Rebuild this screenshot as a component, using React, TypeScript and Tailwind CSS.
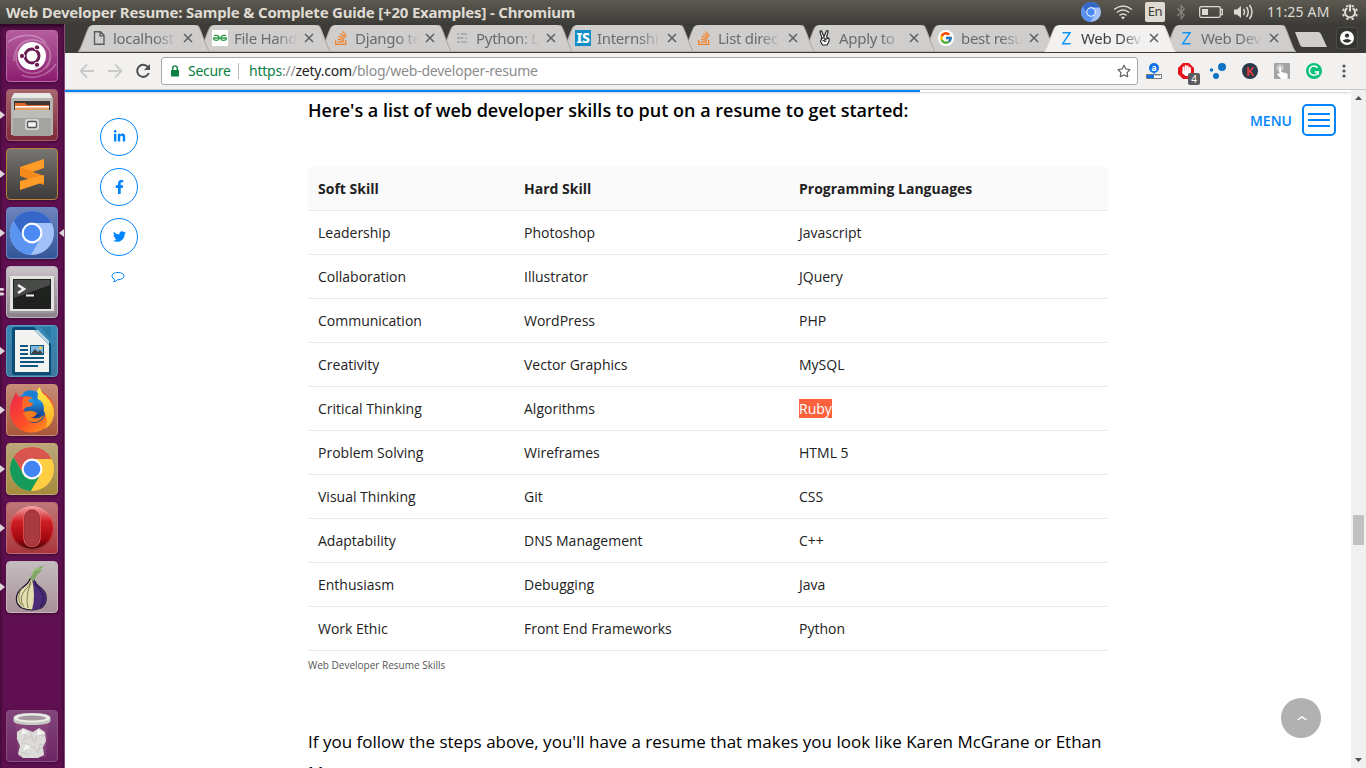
import React from "react";
import { FaLinkedinIn, FaFacebookF, FaTwitter, FaStackOverflow, FaRegStar, FaBluetoothB } from "react-icons/fa";
import { FcGoogle } from "react-icons/fc";

const ui = "font-['Noto_Sans','Open_Sans',sans-serif]";

/* ---------- browser discs ---------- */

function Disc({ top, left, right, hub, ring }: { top: string; left: string; right: string; hub: string; ring: string }) {
  return (
    <g>
      <circle r="22" fill={right} />
      <path d="M-18.46-11.97A22 22 0 0 1 19.6-10H0L-8.66 5Z" fill={top} />
      <path d="M-18.46-11.97L-8.66 5 0 10 8.66 5-1.14 21.97A22 22 0 0 1-18.46-11.97Z" fill={left} />
      <circle r="10.4" fill={ring} />
      <circle r="8.3" fill={hub} />
    </g>
  );
}

const blueDisc = <Disc top="#3567c8" left="#5b93f0" right="#a3c1f9" hub="#4c8bf5" ring="#fff" />;

/* ---------- launcher ---------- */

const glyphs: Record<string, React.ReactNode> = {
  dash: (
    <g fill="none">
      <path d="M8 31C8 15 20 7 33 11c12 4 15 18 7 27M44 21c2 14-8 24-21 22C13 41 7 32 12 21M2 12c11-8 28-10 38 1M50 34c-9 13-24 16-34 11" stroke="#fff" strokeOpacity=".28" strokeWidth="1.6" />
      <circle cx="26" cy="26" r="14" fill="#fff" />
      <circle cx="26" cy="26" r="7" stroke="#6a1a50" strokeWidth="3" />
      <g fill="#6a1a50" stroke="#fff" strokeWidth="1">
        <circle cx="16" cy="26" r="2.6" /><circle cx="31" cy="17.4" r="2.6" /><circle cx="31" cy="34.8" r="2.6" />
      </g>
    </g>
  ),
  files: (
    <g>
      <path d="M8 4h36l3 5v37H5V9z" fill="#b5b5b3" />
      <path d="M8 4h36l2 5H6z" fill="#e8e8e6" />
      <rect x="8" y="12" width="36" height="13" fill="#3c3735" />
      <path d="M9 14h10l2 2h22v6H9z" fill="#df692d" />
      <path d="M9 17h34v3H9z" fill="#fff" /><path d="M9 18.5h34V22H9z" fill="#e8a164" />
      <rect x="7" y="21" width="38" height="26" rx="1" fill="#a3a3a1" />
      <path d="M7 21h38v8H7z" fill="#bcbcba" />
      <rect x="19" y="30" width="14" height="11" rx="2" fill="#d6d6d4" />
      <rect x="21.5" y="32.5" width="9" height="6" rx="1" fill="#f1f1ef" stroke="#555" strokeWidth="1.3" />
    </g>
  ),
  sublime: (
    <g>
      <path d="M14 19l24-8v9l-24 8z" fill="#ff9c28" />
      <path d="M14 19l24 9v9l-24-9z" fill="#f38a1b" />
      <path d="M14 33l24-6v7l-24 8z" fill="#ff9c28" />
    </g>
  ),
  chromium: <g transform="translate(26 26)">{blueDisc}</g>,
  chrome: (
    <g transform="translate(26 26)">
      <Disc top="#d85550" left="#149a5b" right="#ffcd42" hub="#4384f4" ring="#fff" />
    </g>
  ),
  terminal: (
    <g>
      <rect x="3" y="11" width="46" height="36" rx="2" fill="#a09aa0" />
      <rect x="4" y="10" width="44" height="35" rx="1" fill="#e3e3e0" />
      <rect x="7" y="13" width="38" height="30" fill="#202220" />
      <path d="M8 14h36v5L8 32z" fill="#494b49" />
      <path d="M12 19l6 4-6 4" fill="none" stroke="#eee" strokeWidth="2.6" />
      <path d="M20 29.5h8" stroke="#eee" strokeWidth="2" />
    </g>
  ),
  writer: (
    <g>
      <path d="M6 5q0-3 3-3h36v48H9q-3 0-3-3z" fill="#0d4c75" />
      <path d="M28 2h18v18z" fill="#3888b5" />
      <path d="M35 2h10v13z" fill="#2a7aa6" />
      <path d="M9 5h19l15 15v27H9z" fill="#f3f3f1" />
      <path d="M28 5l15 15V16L32 5z" fill="#b9d5e4" />
      <g stroke="#0d5781" strokeWidth="1.8"><path d="M14 21h8M14 25h8M14 29h8M14 33h24M14 37h24M14 41h18" /></g>
      <rect x="24" y="20" width="14" height="10" fill="#0d5781" />
      <rect x="25" y="21" width="12" height="8" fill="#7fb8dd" />
      <path d="M25 29l4-5 3 3 2-2 3 4z" fill="#3a4246" /><circle cx="34.5" cy="23" r="1.5" fill="#efc24b" />
    </g>
  ),
  firefox: (
    <g>
      <circle cx="27" cy="25" r="18" fill="url(#ffblue)" />
      <path d="M10 8q1 4 4 5 4-2 7 0l5 1q-5 2-3 5l4 1q-1 4-5 4-2 8 6 7 4-2 2 2-5 6-10 2 8 8 17 0 5-8-1-17-8-6-3-15 1 4 5 6 9 6 10 15 1 18-17 24C15 51 4 40 4 27 4 18 8 14 10 8z" fill="url(#fforange)" />
      <path d="M34 3q0 5 6 9 8 8 8 18-1 10-9 15 4-8-1-18-9-11-7-18 0-4 3-6z" fill="url(#ffyellow)" />
      <circle cx="28" cy="24" r="10" fill="url(#ffblue)" />
      <path d="M18 8q8-4 14 1l-1 9-8-5q-4-1-7 0z" fill="#1c7fd6" />
      <path d="M17 13q5-2 10 1-6 1-4 4l4 1q0 4-6 4l-5 3z" fill="#ff6a2b" />
      <path d="M17 29q6-4 12-1l2 1q-1 4-7 5 8 2 14-3-4 10-16 6z" fill="#f27b1f" />
    </g>
  ),
  opera: (
    <g>
      <circle cx="26" cy="26" r="22" fill="url(#opera)" />
      <circle cx="26" cy="26" r="21.3" fill="none" stroke="#f2a5a5" strokeOpacity=".4" />
      <rect x="18" y="7.5" width="16" height="37" rx="8" fill="#a83a40" stroke="#ee6a6e" strokeWidth="1.2" />
      <rect x="18.500" y="8" width="15" height="36" rx="7.500" fill="none" stroke="#500" strokeOpacity=".5" strokeWidth=".8" />
    </g>
  ),
  tor: (
    <g>
      <path d="M24 18q-1 4-8 9c-8 7-7 16 0 20q10 4 19 0c7-5 7-14 0-20q-7-5-7-9z" fill="#e3dfae" stroke="#1a1333" strokeWidth="1.2" />
      <path d="M26 18h2q0 4 7 9c7 6 7 15 0 20q-4 2-9 2 4-14 0-31z" fill="#4b2a77" />
      <path d="M25 20q-1 5-6 9-7 8-1 17M25 22q-6 12-3 25M16 27q-6 8-1 17" fill="none" stroke="#827b54" />
      <path d="M29 20q1 5 5 9 7 8 0 17" fill="none" stroke="#26124a" />
      <path d="M25 19q-1-6 5-11l8-4-4 6 3-1q-7 4-9 11z" fill="#7fa765" />
      <path d="M26 14l3-8M30 9l7-2M22 19v-4" stroke="#a8c988" />
    </g>
  ),
  trash: (
    <g>
      <path d="M9 11h34l-3 36H12z" fill="#8d4b80" fillOpacity=".55" />
      <path d="M11 22l6-4 5 2 5 2 6-4 6 4 1 9-3 6 1 8-6 3H17l-5-4 2-8-3-7z" fill="#dcdbd9" />
      <path d="M13 23l7 2-3 6 7-5 5 7 2-8 8 1M15 33l7 1-3 7 8-5 5 7 2-9 5 1M24 21l3 8M31 41l6-4M15 42l8 3" fill="none" stroke="#c2c0bd" strokeWidth=".8" />
      <path d="M17 19l5 4-7 2zM32 20l6 3-7 3zM20 34l5 4-8 3z" fill="#f4f4f2" />
      <path d="M7.500 8q0-5 18.500-5t18.500 5v3q-1 4-18.500 4T7.500 11z" fill="#c9c9c4" />
      <ellipse cx="26" cy="8" rx="18" ry="4.600" fill="#ecece8" />
      <ellipse cx="26" cy="8" rx="14" ry="2.600" fill="#a59aa0" />
    </g>
  ),
};

const launcher = [
  { id: "dash", tile: "from-[#b45c9e] to-[#8d1b70] border-[#b46aa3]", mark: "" },
  { id: "files", tile: "from-[#a5666d] to-[#7e2a3a] border-[#a46069]", mark: "run" },
  { id: "sublime", tile: "from-[#777672] to-[#3d3c3a] border-[#bd8038]", mark: "run" },
  { id: "chromium", tile: "from-[#6d83bd] to-[#355699] border-[#6b87c3]", mark: "active" },
  { id: "terminal", tile: "from-[#cac2c9] to-[#8b8089] border-[#bfb4be]", mark: "two" },
  { id: "writer", tile: "from-[#3888b5] to-[#3c789e] border-[#5a9cc2]", mark: "run" },
  { id: "firefox", tile: "from-[#c58b76] to-[#a8583b] border-[#c78d76]", mark: "run" },
  { id: "chrome", tile: "from-[#baa77c] to-[#a68a3b] border-[#c0ac72]", mark: "run" },
  { id: "opera", tile: "from-[#be7779] to-[#a9353c] border-[#bd6b6f]", mark: "run" },
  { id: "tor", tile: "from-[#c5bcc0] to-[#a89197] border-[#c5b6bc]", mark: "run" },
  { id: "trash", tile: "from-[#82457a] to-[#6d2464] border-[#8b5083]", mark: "" },
];

function LauncherItem({ id, tile, mark }: { id: string; tile: string; mark: string }) {
  return (
    <div className={"relative flex h-[52px] w-[65px] shrink-0 justify-center pr-px " + (id === "trash" ? "mt-auto" : "")}>
      <div className={"h-[52px] w-[52px] rounded-[4px] border bg-linear-to-b shadow-[0_1px_3px_#00000066] " + tile}>
        <svg viewBox="0 0 52 52" className="-m-px h-[52px] w-[52px]">{glyphs[id]}</svg>
      </div>
      {mark && (
        <svg className="absolute left-0 top-[21px] h-[10px] w-[65px]" viewBox="0 0 65 10" fill="#dcd5da">
          {mark === "two" ? <path d="M0 1h3l1.5 1.3L3 3.8H0zM0 5.6h3L4.500 7 3 8.400H0z" /> : <path d="M0 1l5 4-5 4z" />}
          {mark === "active" && <path d="M64 1l-5 4 5 4z" />}
        </svg>
      )}
    </div>
  );
}

/* ---------- tabs ---------- */

const stack = <FaStackOverflow className="h-4 w-4 text-[#f48024]" />;
const zety = (
  <svg viewBox="0 0 16 16" className="h-4 w-4" fill="none" stroke="#0f94f5" strokeWidth="1.5"><path d="M4.500 2.700H12L4.700 13.700h7.800" /></svg>
);

const tabs: { title: string; icon: React.ReactNode; pull: string; z: string; active?: boolean; narrow?: boolean }[] = [
  { title: "localhost", pull: "", z: "z-[9]", icon: <svg viewBox="0 0 16 16" className="h-4 w-4" fill="none" stroke="#5c5c5c" strokeWidth="1.400"><path d="M3.500 1.700h6L13 5.400v8.900H3.500zM9 1.700v4.200h4" /></svg> },
  { title: "File Hand", pull: "-ml-[11px]", z: "z-[8]", icon: <svg viewBox="0 0 16 16" className="h-4 w-4"><path d="M0 0h16v16H0z" fill="#fff" /><path d="M2 5.300h2.500q2.500 0 2.500 2.500t-2.500 2.500Q1.500 10.300 1.500 8H14.500q0 2.300-3 2.300T9 7.800t2.500-2.500H14" fill="none" stroke="#2f9e4c" strokeWidth="1.300" /></svg> },
  { title: "Django te", pull: "-ml-[11px]", z: "z-[7]", icon: stack },
  { title: "Python: L", pull: "-ml-[11px]", z: "z-[6]", icon: <svg viewBox="0 0 16 16" className="h-4 w-4" stroke="#a3a3a3" strokeWidth="1.700"><path d="M3 4h2M6.500 4H13M3 8h6.500M11 8h2M3 12h3M7.500 12H13" /></svg> },
  { title: "Internshi", pull: "-ml-[11px]", z: "z-[5]", icon: <span className="flex h-4 w-4 items-center justify-center bg-[#118ec6] text-[14px] leading-4 font-extrabold tracking-tight text-white">IS</span> },
  { title: "List direc", pull: "-ml-[11px]", z: "z-[4]", icon: stack },
  { title: "Apply to", pull: "-ml-[11px]", z: "z-[3]", icon: <svg viewBox="0 0 16 16" className="h-4 w-4" fill="#fff" stroke="#222" strokeWidth="1.100" strokeLinejoin="round"><path d="M5 8L3 2q0-1.500 1.500-1L7 6.500 9.500 1q1.500-1 1.700.5L9.500 7l2.500 1.500v3L10 15H5.500L3.500 11.500z" /><path d="M4 9l3-1.500 1.500 2L5.500 11M8.500 9.500L11 8M7 11.500l2.500-.5" fill="none" /></svg> },
  { title: "best resu", pull: "-ml-[12px]", z: "z-[2]", narrow: true, icon: <span className="flex h-4 w-4 items-center justify-center rounded-full bg-white"><FcGoogle className="h-[14px] w-[14px]" /></span> },
  { title: "Web Dev", pull: "-ml-[12px]", z: "z-[10]", narrow: true, icon: zety, active: true },
  { title: "Web Dev", pull: "-ml-[12px]", z: "z-[1]", narrow: true, icon: zety },
];

function Tab({ title, icon, pull, z, active, narrow }: (typeof tabs)[number]) {
  return (
    <div className={`relative flex h-[28px] w-[132px] shrink-0 items-center ${narrow ? "pl-[14px]" : "pl-[13px]"} ${pull} ${z}`}>
      <svg className="absolute inset-0 h-[28px] w-[132px]" viewBox="0 0 132 28">
        <path d="M0 28C3 26 9 5 11.500 2.500Q12.500 1 15 1h102q2.500 0 3.500 1.500C123 5 129 26 132 28z" fill={active ? "#f2f1f0" : "#d0cecd"} />
        <path d="M119 1q1.500.5 2 2C124 9 129 26 132 28M0 28C3 26 9 5 11.500 2.500" fill="none" stroke={active ? "#d8d6d4" : "#a9a7a5"} />
        {!active && <path d="M0 27.500h132" stroke="#b5b3b1" />}
      </svg>
      <span className="relative flex h-4 w-4 items-center justify-center">{icon}</span>
      <span className={"relative mask-r-from-65% mask-r-to-100% text-[15px] leading-5 tracking-[-0.3px] whitespace-nowrap " + (narrow ? "ml-[7px] w-[62px] " : "ml-[6px] w-[64px] ") + (active ? "text-[#3f3f3f]" : "text-[#6b6b6b]")}>{title}</span>
      <svg viewBox="0 0 10 10" className="relative ml-[6px] h-[10px] w-[10px]" stroke="#5f5f5f" strokeWidth="1.500"><path d="M1 1l8 8M9 1L1 9" /></svg>
    </div>
  );
}

/* ---------- page ---------- */

const rows = [
  ["Leadership", "Photoshop", "Javascript"],
  ["Collaboration", "Illustrator", "JQuery"],
  ["Communication", "WordPress", "PHP"],
  ["Creativity", "Vector Graphics", "MySQL"],
  ["Critical Thinking", "Algorithms", "Ruby"],
  ["Problem Solving", "Wireframes", "HTML 5"],
  ["Visual Thinking", "Git", "CSS"],
  ["Adaptability", "DNS Management", "C++"],
  ["Enthusiasm", "Debugging", "Java"],
  ["Work Ethic", "Front End Frameworks", "Python"],
];

const cell = "h-[44px] border-b border-[#e8e8e8] px-[10px] pt-[12px] pb-[11px]";
const share = "flex h-[38px] w-[38px] items-center justify-center rounded-full border border-[#0084ff] pb-px";

function Page() {
  return (
    <div className="flex min-h-0 flex-1 bg-white font-['Open_Sans',sans-serif]">
      <div className="relative flex min-w-0 flex-1 overflow-hidden">
        <div className="absolute inset-x-0 top-0 h-[2px] bg-white shadow-[0_1px_2px_#00000030]">
          <div className="h-[2px] w-[855px] bg-[#0084ff]" />
        </div>
        <aside className="flex w-[243px] shrink-0 flex-col gap-3 pt-[28px] pl-[35px] text-[#0084ff]">
          <div className={share}><FaLinkedinIn className="h-[13px] w-[13px]" /></div>
          <div className={share}><FaFacebookF className="h-[14px] w-[13px]" /></div>
          <div className={share}><FaTwitter className="h-[13px] w-[13px]" /></div>
          <svg viewBox="0 0 14 12" className="mt-[3px] ml-[11px] h-[12px] w-[14px]" fill="none" stroke="currentColor"><path d="M3.500 8.300Q1 7 1 5C1 3 3.500 1.500 7 1.500S13 3 13 5 10.500 8.700 6.500 8.700Q5 10.500 2.500 10.700 3.500 10 3.500 8.300z" /></svg>
        </aside>
        <main className="w-[800px] shrink-0">
          <h2 className="mt-[5px] text-[18px] leading-[30px] font-semibold whitespace-nowrap text-black">Here's a list of web developer skills to put on a resume to get started:</h2>
          <table className="mt-[42px] w-[800px] table-fixed border-separate border-spacing-0 text-left text-[14px] leading-[20px] text-[#222]">
            <colgroup><col className="w-[206px]" /><col className="w-[275px]" /><col className="w-[319px]" /></colgroup>
            <thead>
              <tr className="bg-[#fafafa] font-bold">
                <th className={cell}>Soft Skill</th><th className={cell}>Hard Skill</th><th className={cell}>Programming Languages</th>
              </tr>
            </thead>
            <tbody>
              {rows.map((r) => (
                <tr key={r[0]}>
                  {r.map((c) => (
                    <td key={c} className={cell}>{c === "Ruby" ? <span className="bg-[#fb613d] text-white">{c}</span> : c}</td>
                  ))}
                </tr>
              ))}
            </tbody>
          </table>
          <p className="mt-[7px] text-[10px] leading-[14px] text-[#555]">Web Developer Resume Skills</p>
          <p className="mt-[54px] text-[17px] leading-[31px] tracking-[0.01px] whitespace-nowrap text-black">If you follow the steps above, you'll have a resume that makes you look like Karen McGrane or Ethan<br />Marcotte.</p>
        </main>
        <div className="flex flex-1 flex-col items-end justify-between pt-[14px] pr-[15px] pb-[30px]">
          <div className="flex items-center gap-[10px]">
            <span className="text-[14px] font-semibold text-[#0084ff]">MENU</span>
            <div className="flex h-8 w-[34px] flex-col items-center justify-center gap-1 rounded-[5px] border-2 border-[#0084ff]">
              <span className="h-[2px] w-[22px] bg-[#0084ff]" /><span className="h-[2px] w-[22px] bg-[#0084ff]" /><span className="h-[2px] w-[22px] bg-[#0084ff]" />
            </div>
          </div>
          <div className="mr-[15px] flex h-10 w-10 items-center justify-center rounded-full bg-[#b1b1b1]">
            <svg viewBox="0 0 10 6" className="ml-px h-[6px] w-[10px]" fill="none" stroke="#fff" strokeWidth="1.500"><path d="M.5 5L5 2l4.500 3" /></svg>
          </div>
        </div>
      </div>
      <div className="flex w-[15px] shrink-0 flex-col items-center bg-[#f1f1f1]">
        <svg viewBox="0 0 15 15" className="h-[15px] w-[15px]" fill="#505050"><path d="M4 10l3.500-4L11 10z" /></svg>
        <div className="mt-[410px] h-[30px] w-[11px] bg-[#c1c1c1]" />
        <svg viewBox="0 0 15 15" className="mt-auto h-[15px] w-[15px]" fill="#505050"><path d="M4 5l3.500 4L11 5z" /></svg>
      </div>
    </div>
  );
}

function Extensions() {
  return (
    <div className="ml-[7px] flex items-center">
      <svg viewBox="0 0 18 18" className="h-[18px] w-[18px]"><circle cx="9" cy="6" r="5" fill="#0d72e8" /><text x="9" y="8.700" textAnchor="middle" fontSize="9" fontWeight="700" fill="#fff">a</text><path d="M9 10v3" stroke="#0d72e8" /><path d="M1.500 12.500h15v4h-15z" fill="#fff" stroke="#777" /><path d="M11 12v2M14 12v2" stroke="#777" /><path d="M2 13h7v3H2z" fill="#0d72e8" /></svg>
      <svg viewBox="0 0 24 24" className="mt-[7px] ml-[14px] h-6 w-6"><path d="M6 0h6l5 5v6l-5 5H6L1 11V5z" fill="#e8111c" /><path d="M6.500 8V4.500M8.700 8V3M10.800 8V3.500M12.900 9V5" stroke="#fff" strokeWidth="1.900" strokeLinecap="round" /><path d="M5.700 7.500h8V10l-2 3H8.500L5 10z" fill="#fff" /><rect x="11" y="10" width="12" height="12" rx="2" fill="#5c5c5c" /><text x="17" y="19.500" textAnchor="middle" fontSize="10" fill="#fff">4</text></svg>
      <svg viewBox="0 0 18 18" className="ml-[8px] h-[18px] w-[18px]" fill="#0c72c4"><circle cx="13" cy="5" r="4" /><circle cx="7" cy="14" r="3" /><circle cx="2.500" cy="8" r="1.700" /></svg>
      <svg viewBox="0 0 18 18" className="ml-[14px] h-[18px] w-[18px]"><circle cx="9" cy="9" r="8" fill="#28394a" /><text x="9" y="13.500" textAnchor="middle" fontSize="13" fontWeight="600" fill="#e83d3d">K</text></svg>
      <svg viewBox="0 0 18 18" className="ml-[14px] h-[18px] w-[18px]"><rect x="1" y="1" width="16" height="16" rx="1" fill="#a2a2a2" /><circle cx="7" cy="6" r="3.700" fill="#c9c9c9" /><path d="M6 5.500q1.300-1.500 2 0V10l6 1.300q1 1 .5 5.700H8L4 12q1-1.500 2.500 0z" fill="#fff" /></svg>
      <svg viewBox="0 0 18 18" className="ml-[14px] h-[18px] w-[18px]"><circle cx="9" cy="9" r="8" fill="#0dc07a" /><path d="M12.500 5.800A4.600 4.600 0 1 0 13.300 10H9.700M13.300 9.500v3.300" fill="none" stroke="#fff" strokeWidth="1.500" /></svg>
      <svg viewBox="0 0 4 14" className="ml-[19px] h-[14px] w-[4px]" fill="#555"><circle cx="2" cy="2" r="1.600" /><circle cx="2" cy="7" r="1.600" /><circle cx="2" cy="12" r="1.600" /></svg>
    </div>
  );
}

export default function App() {
  return (
    <div className={"flex h-[768px] w-[1366px] flex-col overflow-hidden bg-[#3c3b37] " + ui}>
      <svg className="absolute h-0 w-0">
        <defs>
          <linearGradient id="ffblue" x1="0" y1="0" x2="0" y2="1"><stop stopColor="#22a7f0" /><stop offset="1" stopColor="#152f80" /></linearGradient>
          <linearGradient id="fforange" x1="0" y1="0" x2="1" y2="1"><stop stopColor="#e81f52" /><stop offset=".55" stopColor="#ff4e26" /><stop offset="1" stopColor="#ffa51a" /></linearGradient>
          <linearGradient id="ffyellow" x1="0" y1="0" x2="0" y2="1"><stop stopColor="#fff04a" /><stop offset="1" stopColor="#ffa620" /></linearGradient>
          <linearGradient id="opera" x1="0" y1="0" x2="0" y2="1"><stop stopColor="#f3a5a5" /><stop offset=".35" stopColor="#cf1d25" /><stop offset=".75" stopColor="#a3070e" /><stop offset="1" stopColor="#470507" /></linearGradient>
        </defs>
      </svg>
      <header className="flex h-6 shrink-0 items-center bg-linear-to-b from-[#5c5a50] to-[#3e3d39] pl-[6px] text-[#dfdbd2]">
        <h1 className="text-[15px] leading-6 font-bold tracking-[-0.2px] whitespace-nowrap">Web Developer Resume: Sample &amp; Complete Guide [+20 Examples] - Chromium</h1>
        <div className="mr-[7px] ml-auto flex items-center">
          <svg viewBox="-22 -22 44 44" className="h-5 w-5">{blueDisc}</svg>
          <svg viewBox="0 0 20 16" className="ml-[12px] h-4 w-5" fill="none" stroke="currentColor" strokeWidth="1.500"><path d="M1 5.500Q10-1.500 19 5.500M3.800 8.500q6.200-5 12.400 0M6.500 11.300q3.500-2.800 7 0" /><path d="M8 13.300q2-1.500 4 0l-2 2.200z" fill="currentColor" stroke="none" /></svg>
          <span className="ml-[12px] flex h-5 w-5 items-center justify-center rounded-[2px] bg-[#dfdbd2] text-[13px] tracking-[-0.3px] text-[#3c3b37]">En</span>
          <FaBluetoothB className="ml-[9px] h-4 w-[14px] text-[#86847c]" />
          <svg viewBox="0 0 24 12" className="ml-[11px] h-3 w-6" fill="none" stroke="currentColor" strokeWidth="1.300"><rect x=".7" y=".7" width="20.600" height="10.600" rx="1.500" /><path d="M3 3h6v6H3z" fill="currentColor" stroke="none" /><path d="M22 3.500h1.300v5H22" /></svg>
          <svg viewBox="0 0 20 16" className="ml-[11px] h-4 w-5" fill="none" stroke="currentColor" strokeWidth="1.500"><path d="M0 5.500h3l4-3.500v12l-4-3.500H0z" fill="currentColor" stroke="none" /><path d="M9.500 5q2 3 0 6M12.500 3q3.500 5 0 10M15.500 1q5 7 0 14" /></svg>
          <span className="ml-[13px] w-[62px] text-[14px] leading-6 tracking-[0.2px] whitespace-nowrap">11:25 AM</span>
          <svg viewBox="0 0 18 18" className="ml-[12px] h-[18px] w-[18px]" fill="none" stroke="currentColor" strokeWidth="2"><path d="M6.300 5.200a5 5 0 1 0 5.400 0M9 1.500v7" /><circle cx="9" cy="9.500" r="7" strokeDasharray="2.300 3.198" strokeDashoffset="-1.600" pathLength="43.980" /></svg>
        </div>
      </header>
      <div className="flex min-h-0 flex-1">
        <nav className="flex w-[65px] shrink-0 flex-col gap-[7px] border-r border-[#8a4a7e] bg-[#601051] pt-[6px] pb-[6px] shadow-[inset_0_3px_4px_#2a0524]">
          {launcher.map((l) => <LauncherItem key={l.id} {...l} />)}
        </nav>
        <div className="flex min-w-0 flex-1 flex-col">
          <div className="isolate flex h-[29px] shrink-0 pl-[13px]">
            {tabs.map((t, i) => <Tab key={i} {...t} />)}
            <svg viewBox="0 0 34 16" className="mt-[8px] ml-[-1px] h-4 w-[34px] shrink-0"><path d="M0 0h23q2 0 3 2l6 13H8q-2 0-3-2z" fill="#d0cecd" /></svg>
            <div className="mt-[3px] ml-[7px] flex h-[22px] w-[22px] shrink-0 items-center justify-center rounded-[3px] border border-[#4b4a47] bg-[#353430]">
              <svg viewBox="0 0 14 14" className="h-[14px] w-[14px]"><circle cx="7" cy="7" r="7" fill="#fff" /><circle cx="7" cy="4.600" r="2.100" fill="#353430" /><path d="M2.500 9.500Q7 6.500 11.500 9.500 7 14 2.500 9.500z" fill="#353430" /></svg>
            </div>
          </div>
          <div className="flex h-[37px] shrink-0 items-center border-b border-[#c9c7c5] bg-[#f2f1f0] pl-[14px]">
            <svg viewBox="0 0 16 16" className="h-4 w-4" fill="none" stroke="#cbcac9" strokeWidth="1.800"><path d="M15 8H2M8 1.500L1.500 8 8 14.500" /></svg>
            <svg viewBox="0 0 16 16" className="ml-[12px] h-4 w-4" fill="none" stroke="#cbcac9" strokeWidth="1.800"><path d="M1 8h13M8 1.500L14.500 8 8 14.500" /></svg>
            <svg viewBox="0 0 16 16" className="ml-[12px] h-4 w-4" fill="none" stroke="#505050" strokeWidth="2"><path d="M12.800 4A6 6 0 1 0 13.800 10" /><path d="M15 1v6H9z" fill="#505050" stroke="none" /></svg>
            <div className="ml-[10px] flex h-[28px] w-[977px] items-center rounded-[3px] border border-[#a9a7a5] bg-white text-[14px] leading-5">
              <svg viewBox="0 0 10 12" className="ml-[8px] h-3 w-[10px]"><path d="M1 5h8v6.500H1z" fill="#0b8043" /><path d="M2.700 5V3.200a2.300 2.300 0 0 1 4.600 0V5" fill="none" stroke="#0b8043" strokeWidth="1.400" /></svg>
              <span className="ml-[8px] w-[43px] tracking-[-0.3px] text-[#0b8043]">Secure</span>
              <span className="ml-[7px] h-4 w-px bg-[#bbb]" />
              <span className="ml-[10px] tracking-[-0.22px] whitespace-nowrap text-[#8c8c8c]"><span className="text-[#0b8043]">https</span>://<span className="text-[#222]">zety.com</span>/blog/web-developer-resume</span>
              <FaRegStar className="mr-[6px] ml-auto h-[14px] w-[14px] text-[#5f5f5f]" />
            </div>
            <Extensions />
          </div>
          <Page />
        </div>
      </div>
    </div>
  );
}
